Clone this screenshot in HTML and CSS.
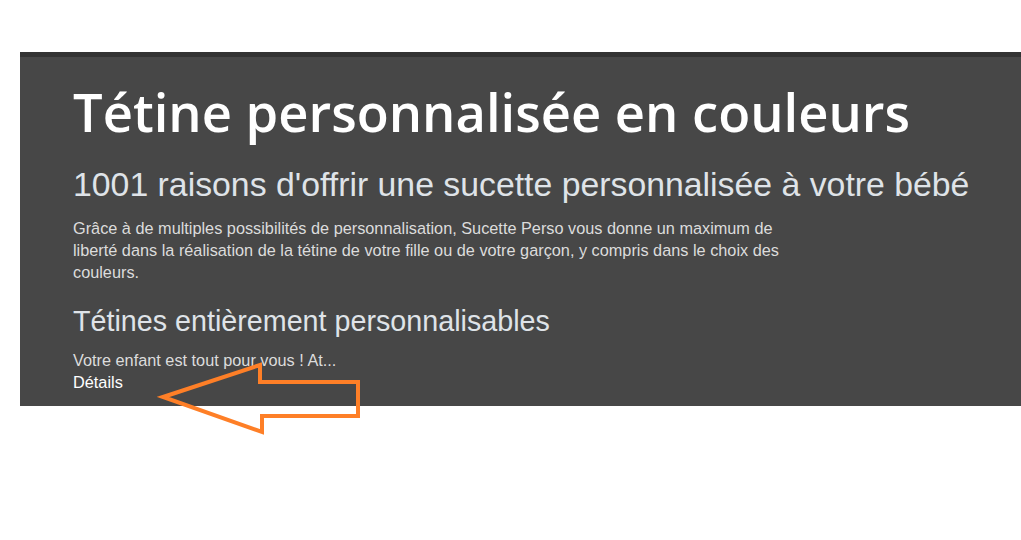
FILE: index.html
```html
<!DOCTYPE html>
<html>
	<head>
		<meta charset="UTF-8">
		<title>Tétine personnalisée en couleurs</title>
		<link rel="stylesheet" href="styles.css">
	</head>
	<body>
		<div class="page">
			<div class="panel">
				<h1 class="title">Tétine personnalisée en couleurs</h1>
				<h2 class="subtitle">1001 raisons d'offrir une sucette personnalisée à votre bébé</h2>
				<p class="intro">Grâce à de multiples possibilités de personnalisation, Sucette Perso vous donne un maximum de liberté dans la réalisation de la tétine de votre fille ou de votre garçon, y compris dans le choix des couleurs.</p>
				<h3 class="section">Tétines entièrement personnalisables</h3>
				<p class="teaser">Votre enfant est tout pour vous ! At...</p>
				<a class="details" href="#">Détails</a>
			</div>
			<svg class="arrow" width="204" height="76" viewBox="0 0 204 76">
				<polygon points="6,36 103,4 103,21 201,21 201,55 105,55 105,71" fill="none" stroke="#fe7f27" stroke-width="4" stroke-linejoin="miter"/>
			</svg>
		</div>
	</body>
</html>
```
FILE: styles.css
```css
html, body{
	margin: 0;
	background: #fff;
	font-family: "Liberation Sans", Arial, sans-serif;
}
.page{
	position: relative;
	box-sizing: border-box;
	min-height: 540px;
	padding: 52px 0 0 20px;
}
.panel{
	border-top: 5px solid #333;
	background: #474747;
	padding: 20px 0 12px 53px;
}
.title{
	margin: 0;
	font-family: "Open Sans", sans-serif;
	font-weight: 600;
	font-size: 52.5px;
	line-height: 70px;
	color: #fff;
}
.subtitle{
	margin: 17px 0 0;
	font-weight: normal;
	font-size: 33.8px;
	line-height: 40px;
	color: #dfe3e8;
}
.intro{
	margin: 13px 0 0;
	width: 720px;
	font-size: 16.3px;
	line-height: 22px;
	color: #dcdcdc;
}
.section{
	margin: 21px 0 0;
	font-weight: normal;
	font-size: 28.7px;
	line-height: 34px;
	color: #dfe3e8;
}
.teaser{
	margin: 11px 0 0;
	font-size: 16.3px;
	line-height: 22px;
	color: #dcdcdc;
}
.details{
	display: block;
	font-size: 16.3px;
	line-height: 23px;
	color: #fff;
	text-decoration: none;
}
.arrow{
	position: absolute;
	left: 157px;
	top: 361px;
}
```
